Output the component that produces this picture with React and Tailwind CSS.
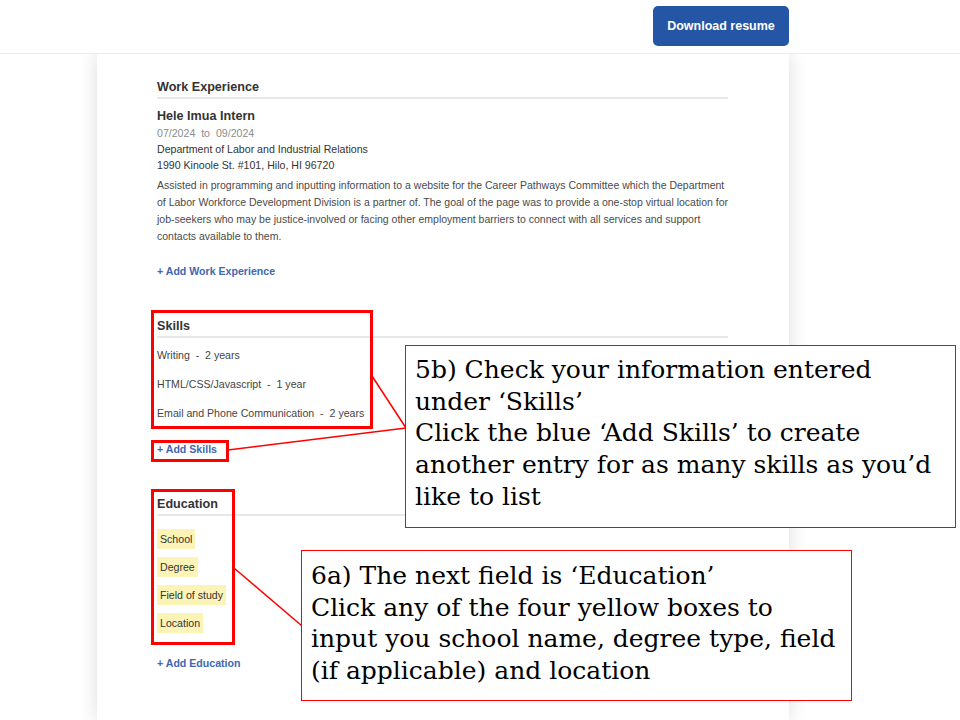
import React from 'react'

const sans = { fontFamily: '"Liberation Sans", Arial, sans-serif' }

const summary = [
  'Assisted in programming and inputting information to a website for the Career Pathways Committee which the Department',
  'of Labor Workforce Development Division is a partner of. The goal of the page was to provide a one-stop virtual location for',
  'job-seekers who may be justice-involved or facing other employment barriers to connect with all services and support',
  'contacts available to them.',
]

function SectionHeading({ children }) {
  return (
    <div className="text-[12.6px] leading-[18px] font-bold text-[#333] pt-[1px] pb-[1px] border-b-2 border-[#e8e8e8]">
      {children}
    </div>
  )
}

function AddLink({ children, className = '' }) {
  return (
    <div className={`text-[10.6px] leading-[16px] font-bold text-[#3f67b3] ${className}`}>+ {children}</div>
  )
}

function Highlight({ children }) {
  return (
    <span className="inline-block h-[20px] leading-[20px] px-[3px] bg-[#fcf3b6] text-[10.6px] text-[#333]">
      {children}
    </span>
  )
}

function Callout({ className, lines }) {
  return (
    <div
      className={`absolute bg-white border border-[#ff0000] text-black text-[25px] leading-[31.7px] ${className}`}
      style={{ fontFamily: '"DejaVu Serif", "Liberation Serif", serif' }}
    >
      {lines.map((l, i) => (
        <div key={i} className="whitespace-nowrap">{l}</div>
      ))}
    </div>
  )
}

export default function App() {
  const skills = [
    ['Writing', '2 years'],
    ['HTML/CSS/Javascript', '1 year'],
    ['Email and Phone Communication', '2 years'],
  ]

  return (
    <div className="relative min-h-screen bg-white overflow-hidden" style={sans}>
      {/* top bar */}
      <header className="relative z-10 h-[54px] bg-white border-b border-[#ececec]">
        <div className="w-[692px] ml-[97px] h-full flex justify-end items-start pt-[6px]">
          <button className="h-[40px] w-[136px] rounded-[5px] bg-[#2456a5] text-white text-[12.5px] font-bold">
            Download resume
          </button>
        </div>
      </header>

      {/* resume paper */}
      <main className="w-[692px] ml-[97px] min-h-[666px] bg-white shadow-[0_0_18px_rgba(0,0,0,0.14)] pl-[60px] pr-[61px] pt-[23px] text-[#444]">
        <section>
          <SectionHeading>Work Experience</SectionHeading>
          <div className="mt-[8px] text-[12.6px] leading-[18px] font-bold text-[#333]">Hele Imua Intern</div>
          <div className="text-[10.6px] leading-[16px] text-[#8c8c8c]">07/2024&nbsp; to &nbsp;09/2024</div>
          <div className="text-[10.6px] leading-[16px] text-[#333]">Department of Labor and Industrial Relations</div>
          <div className="text-[10.6px] leading-[16px] text-[#333]">1990 Kinoole St. #101, Hilo, HI 96720</div>
          <div className="mt-[4px] text-[10.5px] leading-[17px] text-[#4a4a4a]">
            {summary.map((l, i) => (
              <div key={i} className="whitespace-nowrap">{l}</div>
            ))}
          </div>
          <AddLink className="mt-[18px]">Add Work Experience</AddLink>
        </section>

        <section className="mt-[37px]">
          <SectionHeading>Skills</SectionHeading>
          <div className="mt-[9px] flex flex-col gap-[13px]">
            {skills.map(([name, yrs]) => (
              <div key={name} className="text-[10.6px] leading-[16px] text-[#444] whitespace-pre">
                {name}{'  -  '}{yrs}
              </div>
            ))}
          </div>
          <AddLink className="mt-[20px]">Add Skills</AddLink>
        </section>

        <section className="mt-[37px]">
          <SectionHeading>Education</SectionHeading>
          <div className="mt-[13px] flex flex-col items-start gap-[8px]">
            <Highlight>School</Highlight>
            <Highlight>Degree</Highlight>
            <Highlight>Field of study</Highlight>
            <Highlight>Location</Highlight>
          </div>
          <AddLink className="mt-[22px]">Add Education</AddLink>
        </section>
      </main>

      {/* annotation overlay */}
      <div className="absolute left-[151px] top-[310px] w-[222px] h-[119px] border-[3px] border-[#ff0000]" />
      <div className="absolute left-[151px] top-[440px] w-[78px] h-[22px] border-[3px] border-[#ff0000]" />
      <div className="absolute left-[151px] top-[489px] w-[84px] h-[156px] border-[3px] border-[#ff0000]" />
      <svg className="absolute left-0 top-0 pointer-events-none" width="960" height="720">
        <line x1="372" y1="376" x2="406" y2="428" stroke="#ff0000" strokeWidth="1.5" />
        <line x1="228" y1="450" x2="406" y2="428" stroke="#ff0000" strokeWidth="1.5" />
        <line x1="234" y1="568" x2="302" y2="626" stroke="#ff0000" strokeWidth="1.5" />
      </svg>
      <Callout
        className="left-[405px] top-[345px] w-[551px] h-[183px] pl-[9px] pt-[8px]"
        lines={[
          '5b) Check your information entered',
          'under \u2018Skills\u2019',
          'Click the blue \u2018Add Skills\u2019 to create',
          'another entry for as many skills as you\u2019d',
          'like to list',
        ]}
      />
      <Callout
        className="left-[301px] top-[550px] w-[551px] h-[151px] pl-[9px] pt-[9px]"
        lines={[
          '6a) The next field is \u2018Education\u2019',
          'Click any of the four yellow boxes to',
          'input you school name, degree type, field',
          '(if applicable) and location',
        ]}
      />
    </div>
  )
}
